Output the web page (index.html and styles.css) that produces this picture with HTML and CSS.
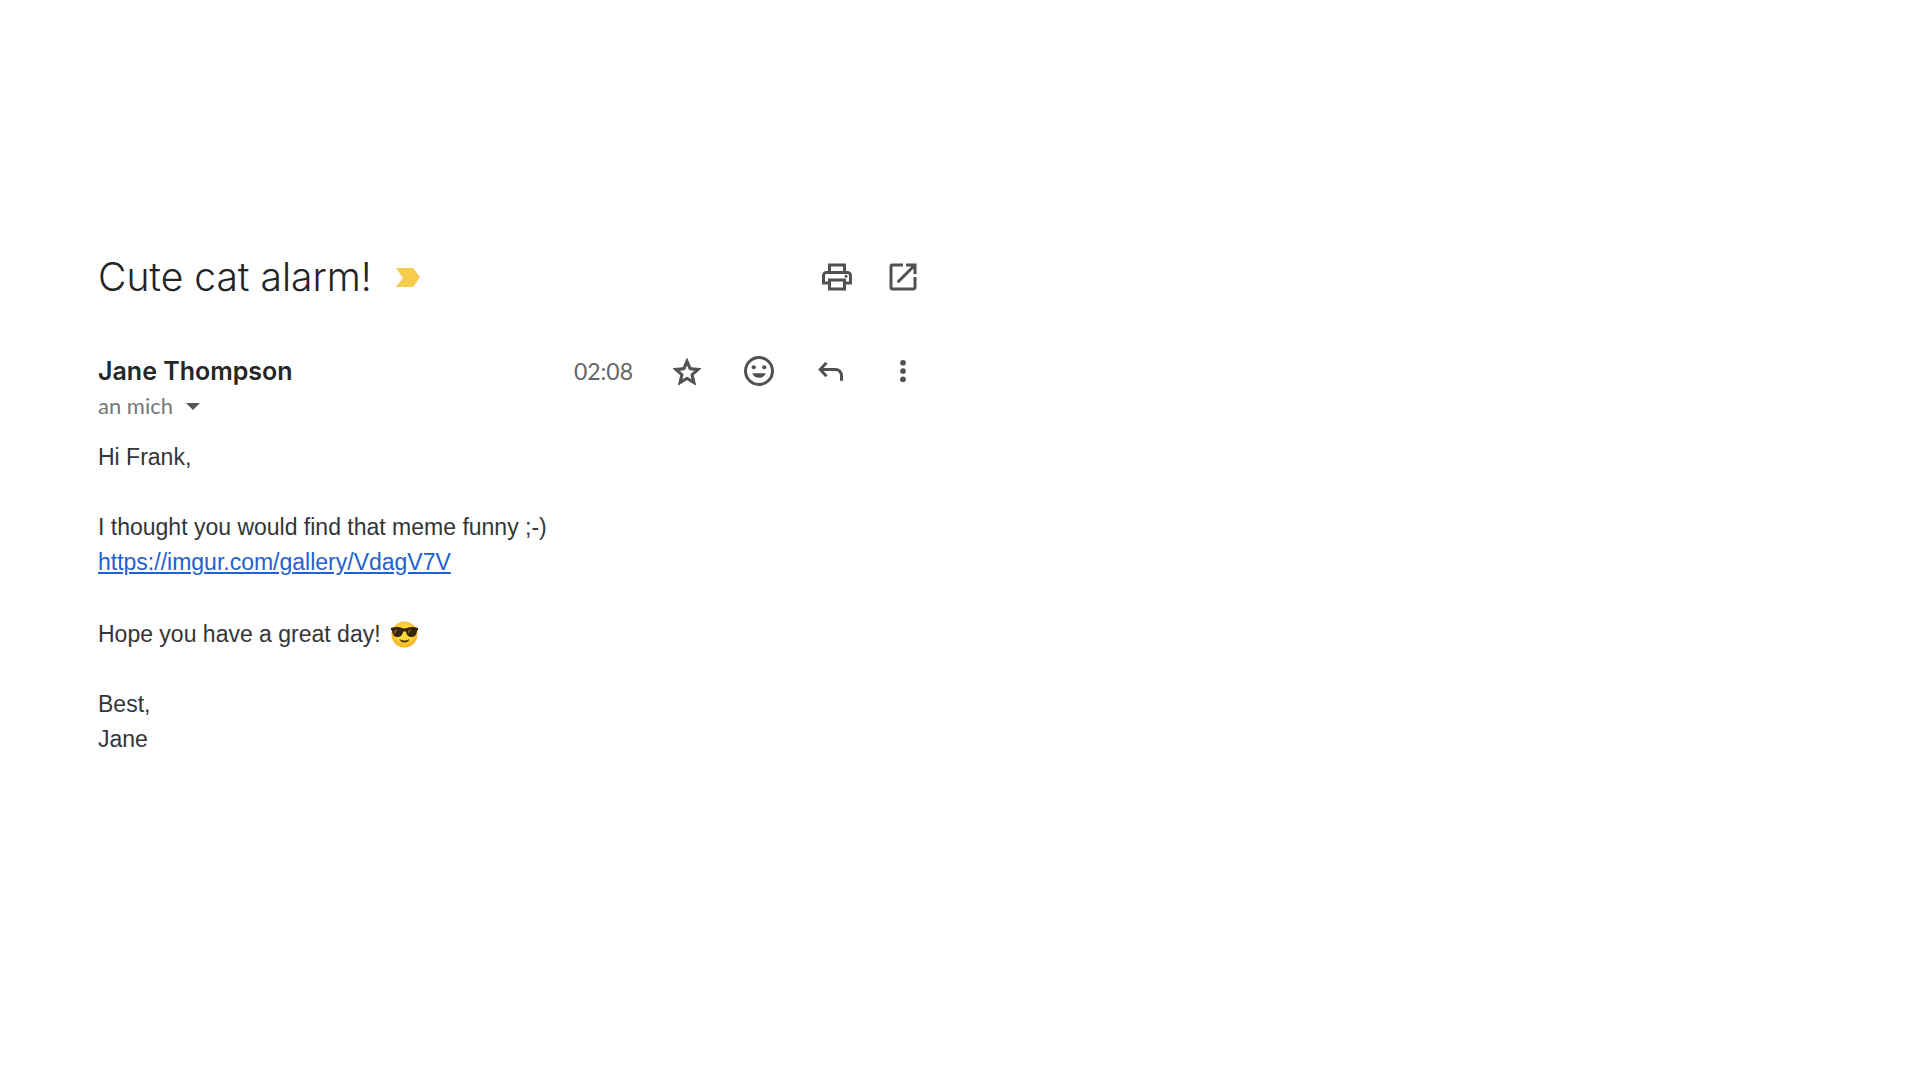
FILE: index.html
```html
<!DOCTYPE html>
<html lang="de">
<head>
<meta charset="utf-8">
<meta name="viewport" content="width=device-width, initial-scale=1">
<title>Cute cat alarm!</title>
<link rel="stylesheet" href="styles.css">
</head>
<body>
<main class="message">
  <header class="subject-bar">
    <h1 class="subject">Cute cat alarm!</h1>
    <button class="marker" type="button" aria-label="Wichtig">
      <svg width="24" height="20" viewBox="0 0 24 20"><path d="M0 1h16q1 0 2 1l6 8-6 9q-1 1-2 1H0l7-9z" fill="#f7cb4d"/></svg>
    </button>
    <div class="actions actions-top">
      <button class="icon-button" type="button" aria-label="Drucken">
        <svg class="icon" viewBox="0 0 24 24"><path d="M19 8h-1V3H6v5H5c-1.660 0-3 1.340-3 3v6h4v4h12v-4h4v-6c0-1.660-1.340-3-3-3zM8 5h8v3H8V5zm8 14H8v-4h8v4zm2-4v-2H6v2H4v-4c0-.55.45-1 1-1h14c.55 0 1 .45 1 1v4h-2z"/><circle cx="18" cy="11.500" r="1"/></svg>
      </button>
      <button class="icon-button" type="button" aria-label="In neuem Fenster">
        <svg class="icon" viewBox="0 0 24 24"><path d="M19 19H5V5h7V3H5a2 2 0 0 0-2 2v14a2 2 0 0 0 2 2h14c1.100 0 2-.9 2-2v-7h-2v7zM14 3v2h3.590l-9.830 9.830 1.410 1.410L19 6.410V10h2V3h-7z"/></svg>
      </button>
    </div>
  </header>
  <section class="sender-bar">
    <h2 class="sender">Jane Thompson</h2>
    <time class="time">02:08</time>
    <div class="actions">
      <button class="icon-button" type="button" aria-label="Markieren">
        <svg class="icon star" viewBox="-1 -2 26 26"><path d="M22 9.240l-7.190-.62L12 2 9.190 8.630 2 9.240l5.460 4.730L5.820 21 12 17.270 18.180 21l-1.630-7.030L22 9.240zM12 15.400l-3.760 2.270 1-4.280-3.320-2.880 4.380-.38L12 6.100l1.710 4.040 4.380.38-3.320 2.880 1 4.280L12 15.400z"/></svg>
      </button>
      <button class="icon-button" type="button" aria-label="Reagieren">
        <svg class="icon" viewBox="0 0 24 24"><path fill-rule="evenodd" d="M12 2a10 10 0 1 0 0 20 10 10 0 0 0 0-20zm0 2a8 8 0 1 1 0 16 8 8 0 0 1 0-16z"/><circle cx="8.500" cy="9.500" r="1.400"/><circle cx="15.500" cy="9.500" r="1.400"/><path d="M7.500 13.500h9c-.8 2-2.500 3-4.500 3s-3.700-1-4.500-3z"/></svg>
      </button>
      <button class="icon-button" type="button" aria-label="Antworten">
        <svg class="icon" viewBox="0 0 24 24"><path d="M9 6.500 4.800 11 9 15.500M4.800 11H15a4 4 0 0 1 4 4v3.500" fill="none" stroke="#4f5250" stroke-width="2"/></svg>
      </button>
      <button class="icon-button" type="button" aria-label="Mehr">
        <svg class="icon" viewBox="0 0 24 24"><circle cx="12" cy="6.500" r="1.900"/><circle cx="12" cy="12" r="1.900"/><circle cx="12" cy="17.500" r="1.900"/></svg>
      </button>
    </div>
  </section>
  <button class="recipient" type="button">an mich
    <svg width="16" height="8" viewBox="0 0 16 8"><path d="M1 1h14L8 8z" fill="#555"/></svg>
  </button>
  <article class="body">
    <p>Hi Frank,</p>
    <p>I thought you would find that meme funny ;-)<br><a href="https://imgur.com/gallery/VdagV7V">https://imgur.com/gallery/VdagV7V</a></p>
    <p class="wish">Hope you have a great day!
      <svg class="emoji" viewBox="0 0 27 27" role="img" aria-label="Smiley mit Sonnenbrille">
        <defs><radialGradient id="face" cx="50%" cy="45%" r="55%"><stop offset="0.5" stop-color="#fdd835"/><stop offset="1" stop-color="#f9b126"/></radialGradient></defs>
        <circle cx="13.500" cy="13.500" r="13" fill="url(#face)"/>
        <path d="M8.500 18q5 3 10 0-1 3.500-5 3.500T8.500 18z" fill="#4a3517"/>
        <path d="M0 7q6-2 11 0 2.500.8 5 0 5-2 11 0v2l-1 1q-.5 5.500-5 6-5 .3-6-5-1.500-1.500-3 0-1 5.300-6 5-4.500-.5-5-6L0 9z" fill="#35240f"/>
        <path d="M3 9.500 7 8l-4 6zM17 9.500l4-1.500-4 5z" fill="#775b28"/>
      </svg>
    </p>
    <p>Best,<br>Jane</p>
  </article>
</main>
</body>
</html>
```
FILE: styles.css
```css
body {
  margin: 0;
  background: #fff;
  color: #333537;
  font-family: "Liberation Sans", Arial, sans-serif;
}

h1, h2, p {
  margin: 0;
}

button {
  display: flex;
  padding: 0;
  border: 0;
  background: none;
  cursor: pointer;
}

.message {
  max-width: 823px;
  padding: 253px 98px 98px;
}

.subject-bar,
.sender-bar {
  display: flex;
  align-items: center;
  height: 48px;
}

.subject {
  color: #222425;
  font-family: Inter, Lato, sans-serif;
  font-size: 39px;
  font-weight: 300;
  line-height: 48px;
}

.marker {
  margin-left: 24px;
}

.actions {
  display: flex;
  gap: 36px;
}

.actions-top {
  gap: 30px;
  margin-left: auto;
}

.icon {
  display: block;
  width: 36px;
  height: 36px;
  fill: #4f5250;
}

.star {
  stroke: #4f5250;
  stroke-width: 0.7;
}

.sender-bar {
  margin-top: 46px;
}

.sender {
  flex: 1;
  color: #242628;
  font-family: Inter, sans-serif;
  font-size: 25px;
  font-weight: 600;
}

.time {
  margin-right: 36px;
  color: #666;
  font-family: Lato, sans-serif;
  font-size: 23px;
}

.recipient {
  align-items: center;
  gap: 12px;
  margin-top: -3px;
  color: #777;
  font-family: Lato, sans-serif;
  font-size: 22px;
  line-height: 28px;
}

.body {
  display: grid;
  gap: 35px;
  margin-top: 20px;
  font-size: 23px;
  line-height: 35px;
}

.body a {
  color: #2261cf;
}

.wish {
  display: flex;
  align-items: center;
  gap: 10px;
  padding-top: 2px;
}

.emoji {
  width: 27px;
  height: 27px;
}
```
